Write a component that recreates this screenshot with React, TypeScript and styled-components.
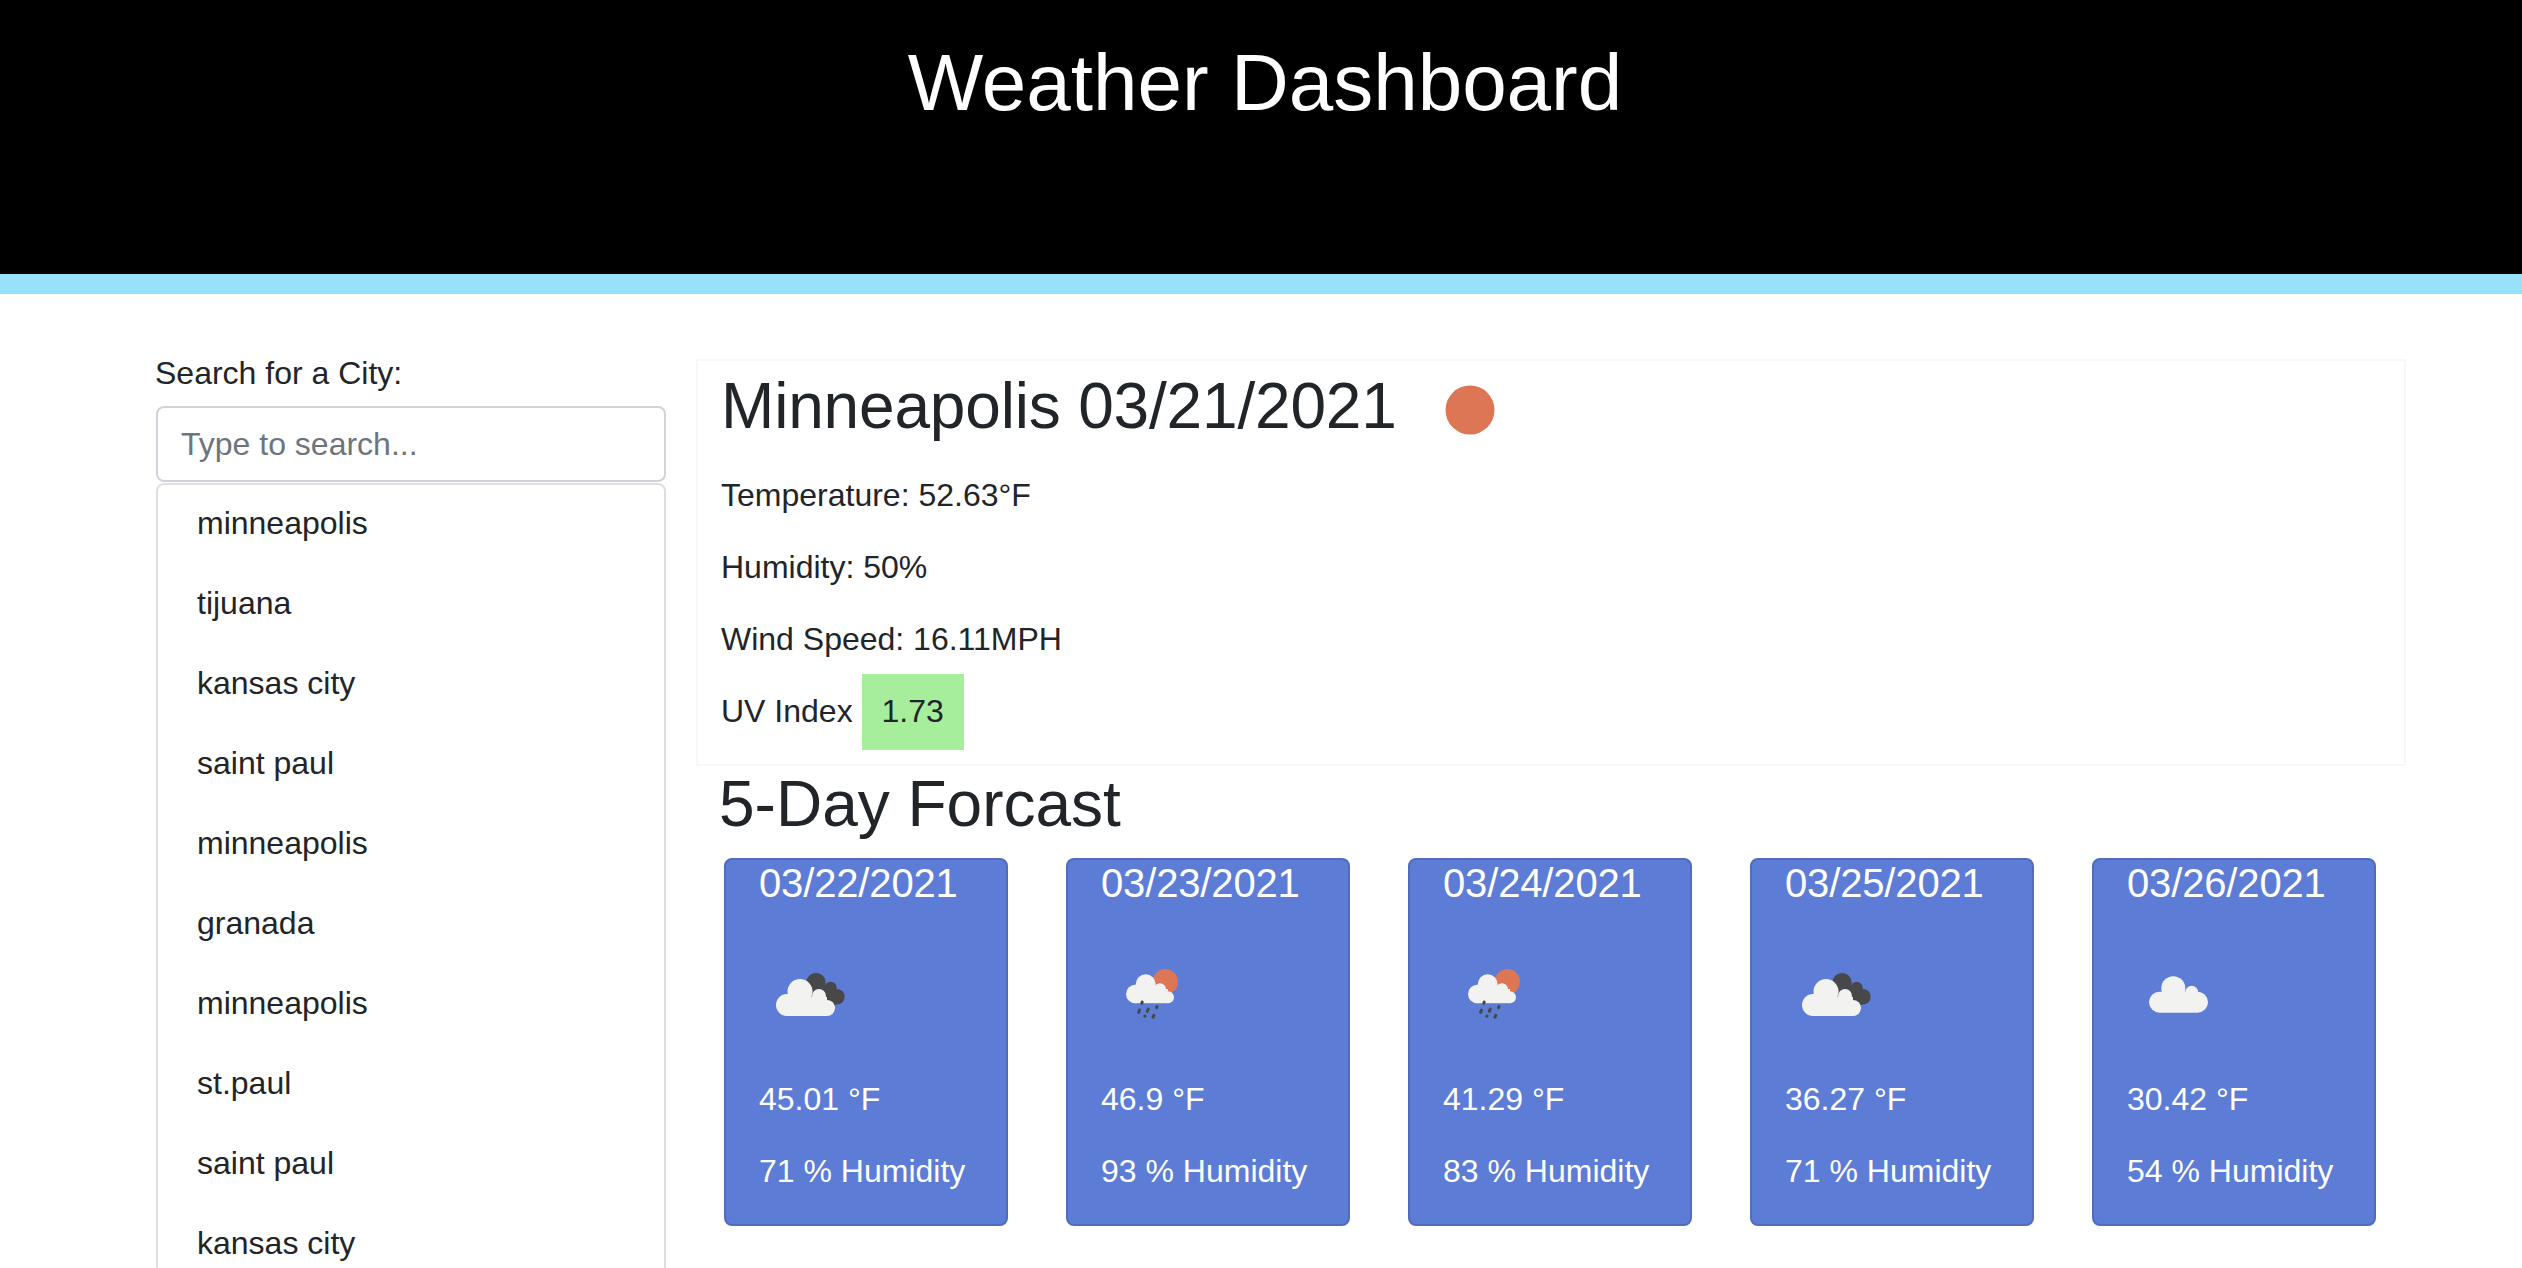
import styled, { createGlobalStyle } from "styled-components";

const GlobalStyle = createGlobalStyle`
  html, body {
    margin: 0;
    padding: 0;
    background: #fff;
  }

  body {
    font-family: "Liberation Sans", Arial, sans-serif;
    font-size: 32px;
    line-height: 48px;
    color: #212529;
  }

  * {
    box-sizing: border-box;
  }
`;

const cities = [
  "minneapolis",
  "tijuana",
  "kansas city",
  "saint paul",
  "minneapolis",
  "granada",
  "minneapolis",
  "st.paul",
  "saint paul",
  "kansas city",
];

type IconKind = "overcast" | "rain" | "cloud";

const forecast: { date: string; icon: IconKind; temp: string; humidity: string }[] = [
  { date: "03/22/2021", icon: "overcast", temp: "45.01", humidity: "71" },
  { date: "03/23/2021", icon: "rain", temp: "46.9", humidity: "93" },
  { date: "03/24/2021", icon: "rain", temp: "41.29", humidity: "83" },
  { date: "03/25/2021", icon: "overcast", temp: "36.27", humidity: "71" },
  { date: "03/26/2021", icon: "cloud", temp: "30.42", humidity: "54" },
];

const CLOUD = "#f2f2f1";
const DARK = "#48484a";
const SUN = "#dc7655";

const WeatherIcon = ({ kind }: { kind: IconKind }) => (
  <IconSvg viewBox="0 0 100 100">
    {kind === "overcast" && (
      <>
        <g fill={DARK}>
          <circle cx="58" cy="37.7" r="9.7" />
          <circle cx="72.7" cy="42.7" r="6" />
          <circle cx="79" cy="51.7" r="7.7" />
          <path d="M52 40h24l8 16-14 8H56z" />
        </g>
        <g fill={CLOUD}>
          <circle cx="42" cy="46.5" r="12.5" />
          <circle cx="61" cy="51" r="7" />
          <circle cx="29" cy="60" r="11" />
          <circle cx="69" cy="63" r="8" />
          <rect x="29" y="52" width="40" height="19" />
        </g>
      </>
    )}
    {kind === "rain" && (
      <>
        <circle cx="65.3" cy="36.7" r="12.7" fill={SUN} />
        <g fill={CLOUD}>
          <circle cx="45.7" cy="39.3" r="10" />
          <circle cx="60" cy="44.3" r="6" />
          <circle cx="35.2" cy="49" r="9.2" />
          <circle cx="68" cy="52.2" r="6" />
          <rect x="35" y="44" width="33" height="14.2" />
        </g>
        <g stroke={DARK} strokeWidth="3" strokeLinecap="round">
          <path d="M42.2 57l-.4 1.4" />
          <path d="M39.5 65l-.9 2.4" />
          <path d="M48.2 64l-.9 2.4" />
          <path d="M57 61.6l-.5 1" />
          <path d="M45 71l-.1.2" />
          <path d="M53.8 70.4l-.8 1.8" />
        </g>
      </>
    )}
    {kind === "cloud" && (
      <g fill={CLOUD}>
        <circle cx="47.3" cy="43.3" r="12" />
        <circle cx="65.7" cy="47.3" r="6.5" />
        <rect x="23" y="46.7" width="59" height="21" rx="10.5" />
      </g>
    )}
  </IconSvg>
);

const App = () => (
  <>
    <GlobalStyle />
    <Page>
      <Banner>
        <BannerTitle>Weather Dashboard</BannerTitle>
      </Banner>
      <Main>
        <Sidebar>
          <SearchLabel htmlFor="city">Search for a City:</SearchLabel>
          <SearchInput id="city" type="text" placeholder="Type to search..." />
          <CityList>
            {cities.map((city, i) => (
              <CityItem key={i}>{city}</CityItem>
            ))}
          </CityList>
        </Sidebar>
        <Content>
          <CurrentPanel>
            <TitleRow>
              <CityTitle>Minneapolis 03/21/2021</CityTitle>
              <SunSvg viewBox="0 0 100 100">
                <circle cx="50" cy="50" r="24.5" fill={SUN} />
              </SunSvg>
            </TitleRow>
            <Stat>Temperature: 52.63°F</Stat>
            <Stat>Humidity: 50%</Stat>
            <Stat $tight>Wind Speed: 16.11MPH</Stat>
            <UvRow>
              UV Index <UvBadge>1.73</UvBadge>
            </UvRow>
          </CurrentPanel>
          <ForecastTitle>5-Day Forcast</ForecastTitle>
          <ForecastRow>
            {forecast.map((day) => (
              <DayCard key={day.date}>
                <DayDate>{day.date}</DayDate>
                <WeatherIcon kind={day.icon} />
                <DayStat>{day.temp} °F</DayStat>
                <DayStat>{day.humidity} % Humidity</DayStat>
              </DayCard>
            ))}
          </ForecastRow>
        </Content>
      </Main>
    </Page>
  </>
);

export default App;

const Page = styled.div`
  height: 1268px;
  overflow: hidden;
`;

const Banner = styled.header`
  height: 294px;
  background: #000;
  border-bottom: 20px solid #98e1fb;
  padding: 35px 0 0 8px;
  text-align: center;
`;

const BannerTitle = styled.h1`
  margin: 0;
  font-size: 80px;
  line-height: 96px;
  font-weight: 400;
  color: #fff;
`;

const Main = styled.main`
  display: grid;
  grid-template-columns: 510px 1710px;
  column-gap: 30px;
  padding: 55px 0 0 156px;
`;

const Sidebar = styled.aside`
  display: flex;
  flex-direction: column;
`;

const SearchLabel = styled.label`
  margin: 0 0 9px -1px;
`;

const SearchInput = styled.input`
  width: 100%;
  height: 76px;
  padding: 12px 23px;
  border: 2px solid #ced4da;
  border-radius: 8px;
  font: inherit;
  color: #495057;
  outline: none;

  &::placeholder {
    color: #6c757d;
    opacity: 1;
  }
`;

const CityList = styled.ul`
  list-style: none;
  margin: 1px 0 0;
  padding: 0;
  border: 2px solid #dfdfdf;
  border-radius: 8px;
`;

const CityItem = styled.li`
  height: 80px;
  padding: 14px 39px;
`;

const Content = styled.section`
  padding-top: 10px;
`;

const CurrentPanel = styled.div`
  height: 407px;
  padding: 0 23px;
  border: 2px solid #f8f8f8;
`;

const TitleRow = styled.div`
  display: flex;
  gap: 23px;
  height: 100px;
  margin: -1px 0 11px;
`;

const CityTitle = styled.h2`
  margin: 8px 0 0;
  font-size: 64px;
  line-height: 77px;
  font-weight: 400;
  letter-spacing: -0.18px;
`;

const SunSvg = styled.svg`
  width: 100px;
  height: 100px;
  flex: none;
`;

const Stat = styled.p<{ $tight?: boolean }>`
  margin: 0 0 ${(props) => (props.$tight ? "11px" : "24px")};
`;

const UvRow = styled.div`
  line-height: 48px;
`;

const UvBadge = styled.span`
  display: inline-block;
  padding: 13px 20px 15px;
  background: #a6ee9b;
`;

const ForecastTitle = styled.h2`
  margin: 0 0 15px 23px;
  font-size: 64px;
  line-height: 77px;
  font-weight: 400;
`;

const ForecastRow = styled.div`
  display: flex;
  gap: 58px;
  padding-left: 28px;
`;

const DayCard = styled.article`
  width: 284px;
  height: 368px;
  padding: 0 33px;
  background: #5c7cd6;
  border: 2px solid #4f6cbd;
  border-radius: 8px;
  color: #fff;
`;

const DayDate = styled.h5`
  margin: -1px 0 38px;
  font-size: 40px;
  line-height: 48px;
  font-weight: 400;
  letter-spacing: -0.15px;
`;

const IconSvg = styled.svg`
  display: block;
  width: 100px;
  height: 100px;
  margin: 0 0 30px -1px;
`;

const DayStat = styled.p`
  margin: 0 0 24px;
  white-space: nowrap;
`;
